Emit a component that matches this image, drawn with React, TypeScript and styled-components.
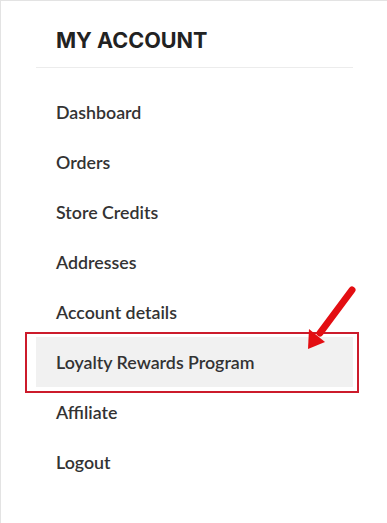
import React from "react";
import styled, { createGlobalStyle } from "styled-components";

const Global = createGlobalStyle`
  html, body { margin: 0; padding: 0; background: #ffffff; }
  * { box-sizing: border-box; }
`;

const Panel = styled.aside`
  width: 387px;
  height: 523px;
  border-top: 1px solid #e3e3e3;
  border-left: 1px solid #e3e3e3;
  background: #fff;
  padding: 0 34px 0 35px;
`;

const Heading = styled.h2`
  margin: 0;
  padding: 24px 0 12px 20px;
  font-family: Inter, "Liberation Sans", sans-serif;
  font-weight: 700;
  font-size: 21.6px;
  line-height: 30px;
  color: #222222;
  border-bottom: 1px solid #ececec;
`;

const Menu = styled.ul`
  list-style: none;
  margin: 0;
  padding: 19px 0 0;
`;

const Item = styled.li<{ $active?: boolean }>`
  position: relative;
  height: 50px;
  line-height: 50px;
  padding-left: 20px;
  font-family: Lato, "Liberation Sans", sans-serif;
  font-weight: 600;
  font-size: 17.8px;
  color: #333333;
  background: ${(p) => (p.$active ? "#f1f1f1" : "transparent")};
`;

const Highlight = styled.span`
  position: absolute;
  left: -11px;
  top: -5px;
  right: -6px;
  bottom: -6px;
  border: 2px solid #cc1b2b;
  pointer-events: none;
`;

const Arrow = styled.svg`
  position: absolute;
  right: -5px;
  top: -50px;
  width: 60px;
  height: 70px;
  overflow: visible;
`;

const items = [
  "Dashboard",
  "Orders",
  "Store Credits",
  "Addresses",
  "Account details",
  "Loyalty Rewards Program",
  "Affiliate",
  "Logout",
];

export default function App() {
  return (
    <>
      <Global />
      <Panel>
        <Heading>MY ACCOUNT</Heading>
        <Menu>
          {items.map((label) => {
            const active = label === "Loyalty Rewards Program";
            return (
              <Item key={label} $active={active}>
                {label}
                {active && (
                  <>
                    <Highlight />
                    <Arrow viewBox="0 0 60 70">
                      <line
                        x1="54"
                        y1="3"
                        x2="22"
                        y2="46"
                        stroke="#e30e12"
                        strokeWidth="7"
                        strokeLinecap="round"
                      />
                      <polygon points="10,62 11,42 27,55" fill="#e30e12" />
                    </Arrow>
                  </>
                )}
              </Item>
            );
          })}
        </Menu>
      </Panel>
    </>
  );
}
